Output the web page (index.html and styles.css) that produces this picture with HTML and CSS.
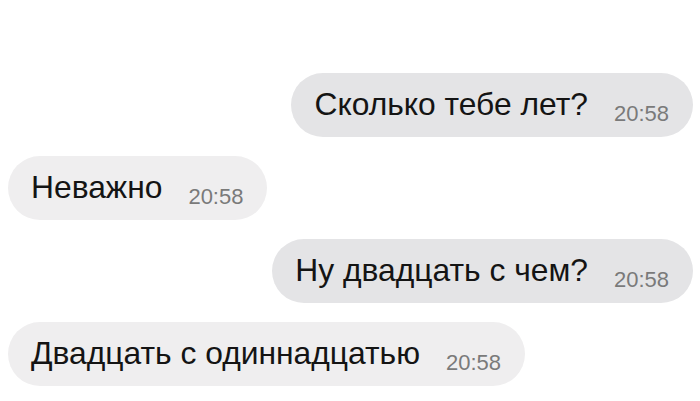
FILE: index.html
```html
<!doctype html>
<html lang="ru">
<head>
  <meta charset="utf-8" />
  <meta name="viewport" content="width=device-width,initial-scale=1" />
  <title>Чат</title>
  <link rel="stylesheet" href="styles.css">
</head>
<body>
  <div id="chat">
    <div class="msg out">
      <span class="txt">Сколько тебе лет?</span><span class="time">20:58</span>
    </div>
    <div class="msg in">
      <span class="txt">Неважно</span><span class="time">20:58</span>
    </div>
    <div class="msg out">
      <span class="txt">Ну двадцать с чем?</span><span class="time">20:58</span>
    </div>
    <div class="msg in">
      <span class="txt">Двадцать с одиннадцатью</span><span class="time">20:58</span>
    </div>
  </div>
</body>
</html>
```

FILE: styles.css
```css
html, body { margin:0; padding:0; height:100%; background:#fff; overflow:hidden;
  font-family:"Liberation Sans",Arial,sans-serif; color:#141414; }
#chat{
  display:flex; flex-direction:column; gap:19px;
  padding:73px 7px 0 8px;
}
.msg{
  height:64px; box-sizing:border-box; border-radius:32px;
  padding:0 24px 0 23px; white-space:nowrap;
  display:flex; align-items:center;
}
.msg.out{ align-self:flex-end; background:#e4e4e6; }
.msg.in{ align-self:flex-start; background:#efeeef; }
.txt{ font-size:31.8px; line-height:1; }
.time{ font-size:22px; color:#7a7a7a; margin-left:26px; margin-top:18px; line-height:1; }
```
